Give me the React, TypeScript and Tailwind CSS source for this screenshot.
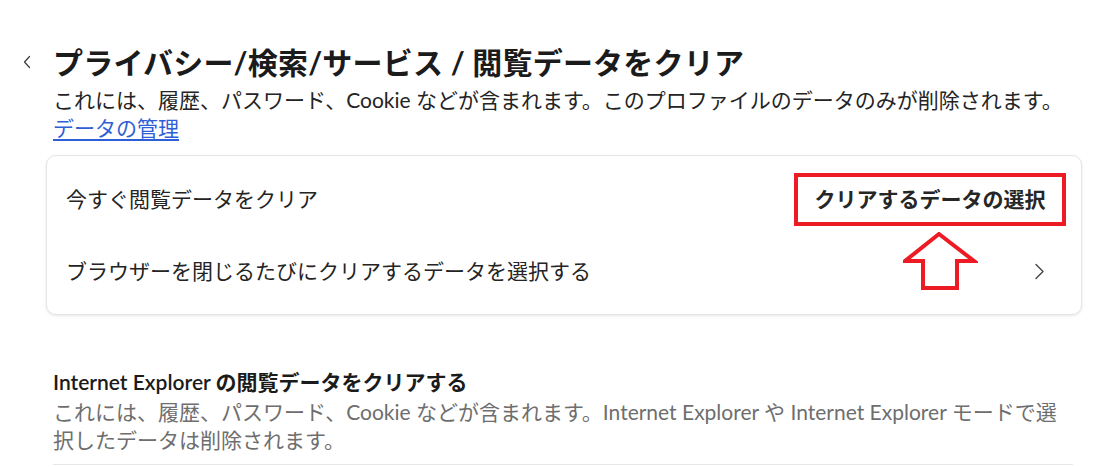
import React from 'react';

const FONT = "font-['Lato','Noto_Sans_CJK_JP',sans-serif]";

const BackChevron = () => (
  <svg width="10" height="14" viewBox="0 0 10 14" fill="none" className="text-[#3a3a3a]">
    <path d="M7.5 1.5 L2.5 7 L7.5 12.5" stroke="currentColor" strokeWidth="1.2" strokeLinecap="round" strokeLinejoin="round" />
  </svg>
);

const RightChevron = () => (
  <svg width="11" height="17" viewBox="0 0 11 17" fill="none" className="text-[#444]">
    <path d="M2 1.5 L9 8.5 L2 15.5" stroke="currentColor" strokeWidth="1.4" strokeLinecap="round" strokeLinejoin="round" />
  </svg>
);

// annotation arrow drawn over the card
const UpArrow = () => (
  <svg
    width="75"
    height="60"
    viewBox="0 0 75 60"
    fill="none"
    className="absolute left-[856px] top-[76px] pointer-events-none"
  >
    <polygon
      points="36,2 71,29 54,29 54,56 20,56 20,29 2,29"
      stroke="#ed1c24"
      strokeWidth="4"
      strokeLinejoin="miter"
      fill="white"
    />
  </svg>
);

export default function App() {
  return (
    <div className={`w-[1114px] h-[467px] overflow-hidden bg-white ${FONT}`}>
      <div className="pl-[53px] pr-[32px] pt-[42px]">
        <div className="flex items-center h-[40px]">
          <div className="-ml-[31px] w-[31px] flex items-center">
            <BackChevron />
          </div>
          <h1 className="text-[30px] leading-[40px] font-bold tracking-[0.2px] text-[#1b1b1b] whitespace-nowrap">
            プライバシー/検索/サービス / 閲覧データをクリア
          </h1>
        </div>

        <p className="mt-[4px] text-[21px] leading-[28px] text-[#242424] whitespace-nowrap">
          これには、履歴、パスワード、Cookie などが含まれます。このプロファイルのデータのみが削除されます。
        </p>
        <a href="#" className="block w-fit text-[21px] leading-[28px] text-[#2f5fd6] underline underline-offset-[3px]">
          データの管理
        </a>

        <div className="relative mt-[13px] -ml-[7px] w-[1036px] rounded-[10px] border border-[#e6e6e6] bg-white py-[7px] shadow-[0_1px_3px_rgba(0,0,0,0.10)]">
          <div className="flex h-[72px] items-center justify-between pl-[19px] pr-[15px]">
            <span className="text-[21px] text-[#242424]">今すぐ閲覧データをクリア</span>
            <div className="flex h-[53px] w-[272px] items-center justify-center border-4 border-[#ed1c24]">
              <span className="text-[21px] font-bold text-[#262626]">クリアするデータの選択</span>
            </div>
          </div>
          <div className="flex h-[72px] items-center justify-between pl-[19px] pr-[36px]">
            <span className="text-[21px] text-[#242424]">ブラウザーを閉じるたびにクリアするデータを選択する</span>
            <RightChevron />
          </div>
          <UpArrow />
        </div>

        <h2 className="mt-[53px] text-[21px] leading-[28px] font-semibold text-[#1b1b1b]">
          Internet Explorer の閲覧データをクリアする
        </h2>
        <p className="mt-[2px] w-[1008px] text-[21px] leading-[28px] text-[#6e6e6e]">
          これには、履歴、パスワード、Cookie などが含まれます。Internet Explorer や Internet Explorer モードで選択したデータは削除されます。
        </p>
        <div className="mt-[10px] w-[1020px] border-t border-[#e8e8e8]" />
      </div>
    </div>
  );
}
